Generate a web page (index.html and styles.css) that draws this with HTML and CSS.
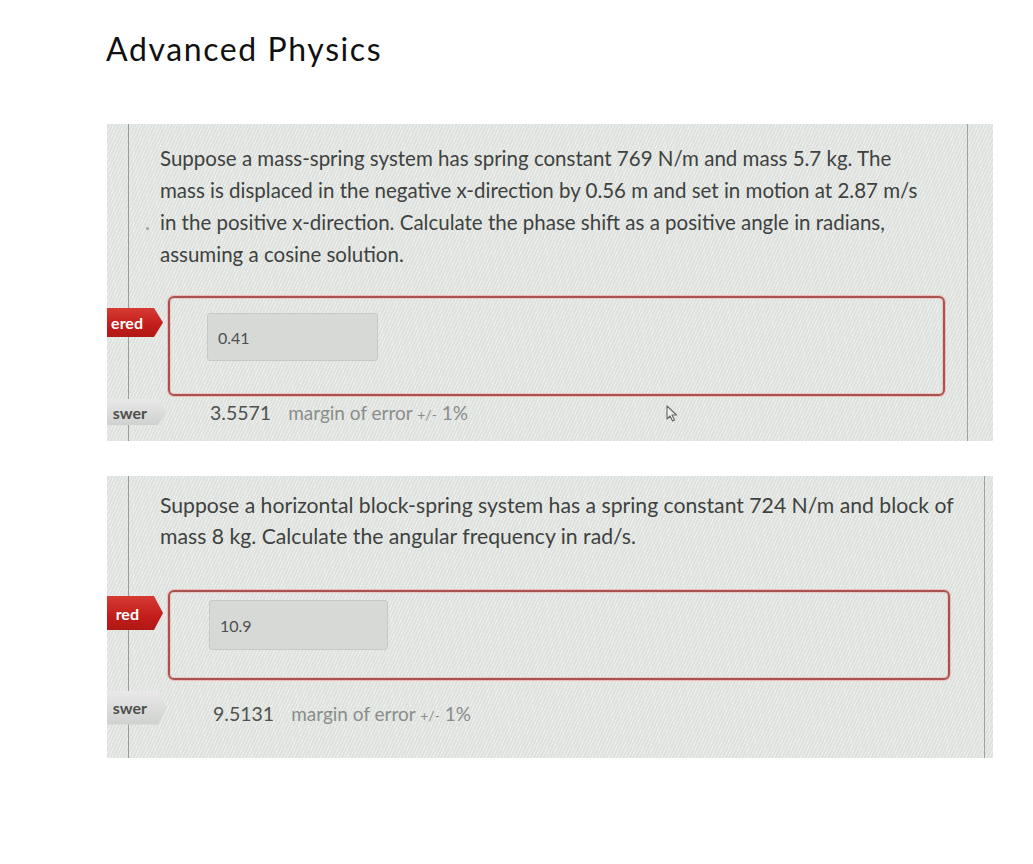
FILE: index.html
```html
<!DOCTYPE html>
<html>
<head>
<meta charset="utf-8">
<link rel="stylesheet" href="styles.css">
</head>
<body>
<h1 class="title">Advanced Physics</h1>

<div class="photo photo-one">
  <p class="question q-one">Suppose a mass-spring system has spring constant 769 N/m and mass 5.7 kg. The<br>mass is displaced in the negative x-direction by 0.56 m and set in motion at 2.87 m/s<br>in the positive x-direction. Calculate the phase shift as a positive angle in radians,<br>assuming a cosine solution.</p>
  <span class="dot"></span>
  <div class="answer-row row-one">
    <div class="badge badge-red">ered</div>
    <div class="answer-box box-one">
      <div class="input input-one">0.41</div>
    </div>
  </div>
  <div class="correct-row correct-one">
    <div class="badge badge-grey">swer</div>
    <div class="correct-text"><span class="value">3.5571</span><span class="margin">margin of error <small>+/-</small> 1%</span></div>
  </div>
  <svg class="pointer" width="14" height="18" viewBox="0 0 14 18"><path d="M2 1 L2 14 L5 11 L7.5 16 L9.5 15 L7 10 L11.5 10 Z" fill="#eef0ee" stroke="#666" stroke-width="1.1" stroke-linejoin="round"/></svg>
</div>

<div class="photo photo-two">
  <p class="question q-two">Suppose a horizontal block-spring system has a spring constant 724 N/m and block of<br>mass 8 kg. Calculate the angular frequency in rad/s.</p>
  <div class="answer-row row-two">
    <div class="badge badge-red badge-red-two">red</div>
    <div class="answer-box box-two">
      <div class="input input-two">10.9</div>
    </div>
  </div>
  <div class="correct-row correct-two">
    <div class="badge badge-grey badge-grey-two">swer</div>
    <div class="correct-text"><span class="value">9.5131</span><span class="margin">margin of error <small>+/-</small> 1%</span></div>
  </div>
</div>
</body>
</html>
```
FILE: styles.css
```css
* { box-sizing: border-box; }

html, body {
  margin: 0;
  padding: 0;
  background: #ffffff;
}

body {
  font-family: "Lato", "Open Sans", sans-serif;
  color: #111;
  width: 1033px;
  height: 864px;
  overflow: hidden;
}

.title {
  margin: 0;
  padding: 30px 0 0 106px;
  height: 124px;
  font-family: "Lato", sans-serif;
  font-weight: 400;
  font-size: 32px;
  line-height: 38px;
  letter-spacing: 1.6px;
  color: #111;
}

.photo {
  position: relative;
  margin-left: 107px;
  width: 886px;
  background-color: #e2e6e2;
  color: #474a48;
  overflow: hidden;
}

.photo-one {
  height: 317px;
  padding: 18px 0 0 0;
  background-image:
    linear-gradient(90deg, transparent 21px, #9a9c9a 21px, #9a9c9a 22px, transparent 22px, transparent 860px, #a0a2a0 860px, #a0a2a0 861px, transparent 861px),
    repeating-linear-gradient(115deg, rgba(255,255,255,0.35) 0 1px, rgba(0,0,0,0.02) 1px 3px);
}

.photo-two {
  margin-top: 35px;
  height: 282px;
  padding: 14px 0 0 0;
  background-image:
    linear-gradient(90deg, transparent 21px, #9a9c9a 21px, #9a9c9a 22px, transparent 22px, transparent 877px, #a0a2a0 877px, #a0a2a0 878px, transparent 878px),
    repeating-linear-gradient(115deg, rgba(255,255,255,0.35) 0 1px, rgba(0,0,0,0.02) 1px 3px);
}

.question {
  margin: 0;
  padding-left: 53px;
  color: #3f4240;
  white-space: nowrap;
}

.q-one { line-height: 32px; font-size: 20.5px; }
.q-two { line-height: 31px; font-size: 21.2px; }

.dot {
  position: absolute;
  left: 39px;
  top: 103px;
  width: 3px;
  height: 3px;
  border-radius: 50%;
  background: #9aa09a;
}

.answer-row {
  display: flex;
  align-items: flex-start;
  gap: 5px;
}

.row-one { margin-top: 26px; }
.row-two { margin-top: 38px; }

.badge {
  flex: none;
  font-weight: 700;
  font-size: 16px;
  display: flex;
  align-items: center;
  justify-content: flex-end;
  white-space: nowrap;
}

.badge-red {
  width: 56px;
  height: 29px;
  margin-top: 12px;
  padding-right: 20px;
  color: #ffffff;
  background: linear-gradient(180deg, #d63a33 0%, #c21d1a 60%, #b01814 100%);
  clip-path: polygon(0 0, calc(100% - 9px) 0, 100% 50%, calc(100% - 9px) 100%, 0 100%);
}

.badge-red-two {
  height: 34px;
  margin-top: 6px;
  padding-right: 24px;
}

.badge-grey {
  width: 60px;
  height: 26px;
  padding-right: 20px;
  color: #4d4f4d;
  background: linear-gradient(180deg, #e8e9e8 0%, #cfd1cf 100%);
  clip-path: polygon(0 0, calc(100% - 9px) 0, 100% 50%, calc(100% - 9px) 100%, 0 100%);
}

.badge-grey-two { height: 34px; }

.answer-box {
  border: 2px solid #a9534d;
  box-shadow: 0 0 0 1px rgba(240,160,160,0.6), inset 0 0 0 1px rgba(240,170,170,0.5);
  border-radius: 6px;
}

.box-one {
  width: 777px;
  height: 100px;
  padding: 15px 0 0 37px;
}

.box-two {
  width: 782px;
  height: 90px;
  padding: 8px 0 0 39px;
}

.input {
  background: #d6d9d6;
  border: 1px solid #c6c9c6;
  border-radius: 3px;
  font-size: 16px;
  color: #4e504e;
  display: flex;
  align-items: center;
  padding-left: 10px;
}

.input-one { width: 171px; height: 48px; }
.input-two { width: 179px; height: 50px; }

.correct-row {
  display: flex;
  align-items: center;
}

.correct-one { margin-top: 3px; }
.correct-two { margin-top: 10px; }

.correct-text {
  padding-left: 43px;
  font-size: 19.5px;
  white-space: nowrap;
}

.correct-two .correct-text { padding-left: 46px; padding-top: 12px; }

.value {
  color: #4f524f;
  margin-right: 17px;
}

.margin {
  color: #8a8d8a;
  font-size: 19px;
}

.margin small {
  font-size: 14px;
}

.pointer {
  position: absolute;
  left: 558px;
  top: 281px;
}
```
